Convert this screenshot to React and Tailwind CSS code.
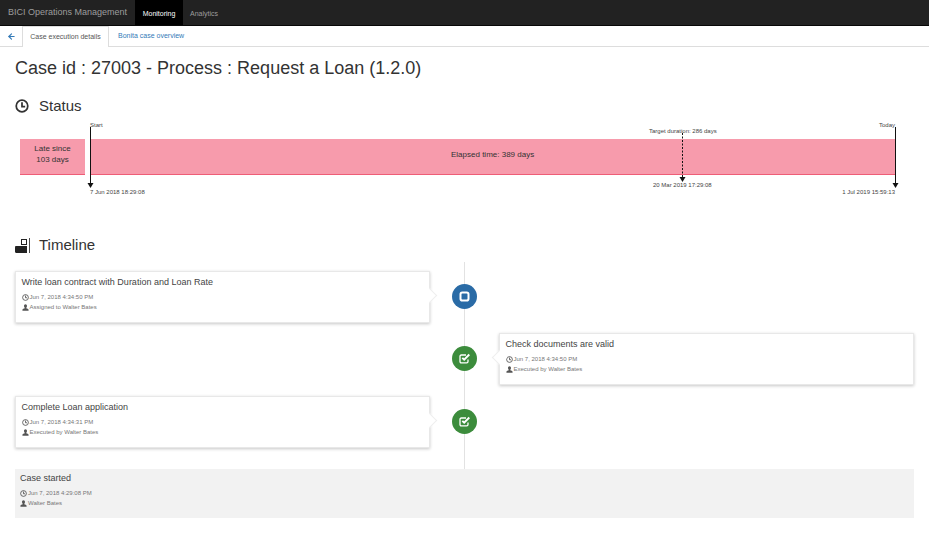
import { ArrowLeft } from "lucide-react";

const font = "font-['Liberation_Sans',Arial,sans-serif]";

function ClockIcon({ size = 7 }) {
  return (
    <svg width={size} height={size} viewBox="0 0 16 16" fill="none" stroke="currentColor" strokeWidth="2" className="shrink-0">
      <circle cx="8" cy="8" r="6.6" />
      <path d="M8 3.600V8.600H11.600" />
    </svg>
  );
}

function UserIcon() {
  return (
    <svg width="7" height="7" viewBox="0 0 16 16" fill="currentColor" className="shrink-0">
      <path d="M8 0.5c2.2 0 3.4 1.7 3.4 3.8 0 1.7-.7 3.2-1.6 4v1.5c1.8.8 5.2 1.3 5.2 3.4v2.3H1v-2.3c0-2.1 3.4-2.6 5.2-3.4V8.3c-.9-.8-1.6-2.3-1.6-4C4.600 2.200 5.800.5 8 .5z" />
    </svg>
  );
}

function Meta({ date, who }) {
  return (
    <div className="text-[6px] leading-[10px] text-[#777]">
      <div className="flex items-center gap-[1px] h-[10px]">
        <span className="text-[#555]"><ClockIcon /></span>
        <span>{date}</span>
      </div>
      <div className="flex items-center gap-[1px] h-[10px]">
        <span className="text-[#555]"><UserIcon /></span>
        <span>{who}</span>
      </div>
    </div>
  );
}

function Card({ title, date, who, side }) {
  return (
    <div className="relative h-[52px] w-[415px] bg-white border border-[#e8e8e8] shadow-[0_1px_3px_rgba(0,0,0,0.22)] pl-[5.500px] pt-[3px]">
      <div className="text-[9px] leading-[14px] text-[#444] mb-[3px]">{title}</div>
      <Meta date={date} who={who} />
      {side === "left" ? (
        <span className="absolute right-[-6px] top-[18px] h-[11px] w-[11px] rotate-45 bg-white border-t border-r border-[#eeeeee]" />
      ) : (
        <span className="absolute left-[-6px] top-[18px] h-[11px] w-[11px] rotate-45 bg-white border-b border-l border-[#eeeeee]" />
      )}
    </div>
  );
}

function Badge({ color, children }) {
  return (
    <div className={`relative z-10 flex h-[25px] w-[25px] items-center justify-center rounded-full text-white ${color}`}>
      {children}
    </div>
  );
}

const stopIcon = (
  <svg width="11" height="11" viewBox="0 0 11 11" fill="none" stroke="white" strokeWidth="2">
    <rect x="1.500" y="1.500" width="8" height="8" rx="1.800" />
  </svg>
);

const checkIcon = (
  <svg width="12" height="11" viewBox="0 0 12 11" fill="none" stroke="white">
    <path d="M9 6.500V8.500C9 9.300 8.500 9.800 7.700 9.800H2.300C1.500 9.800 1 9.300 1 8.500V3.300C1 2.500 1.500 2 2.300 2H7" strokeWidth="1.300" />
    <path d="M3.300 4.800L5.200 6.700L10.300 1.500" strokeWidth="1.900" />
  </svg>
);

function Arrow({ height, dashed }) {
  return (
    <svg width="7" height={height} viewBox={`0 0 7 ${height}`} className="block">
      <line x1="3.500" y1="0" x2="3.500" y2={height - 5} stroke="#111" strokeWidth="1" strokeDasharray={dashed ? "2 1.500" : undefined} />
      <path d={`M0.500 ${height - 5}H6.500L3.500 ${height}Z`} fill="#111" />
    </svg>
  );
}

function StatusChart() {
  return (
    <div className="relative h-[76px] mx-[5px] text-[#444]">
      <div className="absolute inset-x-0 top-[17px] flex gap-[5px]">
        <div className="h-[36px] w-[65px] bg-[#f79bac] border-b border-[#ee5d77] flex items-center justify-center pb-[5px] text-center text-[8px] leading-[11px] text-[#333]">
          Late since<br />103 days
        </div>
        <div className="h-[36px] w-[805px] bg-[#f79bac] border-b border-[#ee5d77] pt-[10px] pl-[361px] text-[8px] leading-[12px] text-[#333]">
          Elapsed time: 389 days
        </div>
      </div>
      {/* start marker */}
      <div className="absolute left-[66.500px] top-[5px]"><Arrow height={61} /></div>
      <div className="absolute left-[70px] top-0 text-[6px] leading-[7px]">Start</div>
      <div className="absolute left-[70px] top-[66px] text-[6px] leading-[9px]">7 Jun 2018 18:29:08</div>
      {/* target marker */}
      <div className="absolute left-[659px] top-[11px]"><Arrow height={49} dashed /></div>
      <div className="absolute left-[629px] top-[5px] text-[6px] leading-[8px] whitespace-nowrap">Target duration: 286 days</div>
      <div className="absolute left-[633px] top-[59px] text-[6px] leading-[9px] whitespace-nowrap">20 Mar 2019 17:29:08</div>
      {/* today marker */}
      <div className="absolute left-[872px] top-[5px]"><Arrow height={61} /></div>
      <div className="absolute right-[14px] top-0 text-[6px] leading-[7px]">Today</div>
      <div className="absolute right-[14px] top-[66px] text-[6px] leading-[9px] whitespace-nowrap">1 Jul 2019 15:59:13</div>
    </div>
  );
}

function Row({ badge, left, right, className }) {
  return (
    <div className={`grid grid-cols-[415px_69px_415px] items-center ${className}`}>
      <div>{left}</div>
      <div className="flex justify-center pb-[2px]">{badge}</div>
      <div>{right}</div>
    </div>
  );
}

export default function App() {
  return (
    <div className={`${font} min-h-[545px] bg-white text-[#333]`}>
      <header className="flex h-[26px] items-stretch bg-[#222] border-b border-[#080808]">
        <div className="flex items-center pl-[8px] pr-[8px] pt-[1px] w-[135px] text-[9px] whitespace-nowrap text-[#9d9d9d]">BICI Operations Management</div>
        <div className="flex items-center justify-center pt-[3px] w-[48px] bg-black text-[7px] text-white">Monitoring</div>
        <div className="flex items-center pl-[7px] pt-[3px] text-[7px] text-[#9d9d9d]">Analytics</div>
      </header>

      <nav className="flex h-[21px] items-end border-b border-[#ddd] text-[7px]">
        <div className="flex h-full w-[22px] items-center justify-center text-[#337ab7]">
          <ArrowLeft size={9} strokeWidth={3} />
        </div>
        <div className="flex h-[21px] -mb-px w-[87px] items-center justify-center bg-white border border-b-0 border-[#ddd] text-[#555]">Case execution details</div>
        <div className="flex h-full items-center pl-[9px] pt-px text-[#337ab7]">Bonita case overview</div>
      </nav>

      <main className="px-[15px]">
        <h1 className="mt-[11px] text-[18px] leading-[21px] font-normal text-[#333] whitespace-nowrap">Case id : 27003 - Process : Request a Loan (1.2.0)</h1>

        <h2 className="mt-[18px] flex h-[18px] items-center gap-[10px] text-[15px] text-[#333]">
          <ClockIcon size={14} />
          Status
        </h2>

        <div className="mt-[7px]">
          <StatusChart />
        </div>

        <h2 className="mt-[38px] flex h-[18px] items-center gap-[9px] text-[15px] text-[#333]">
          <svg width="15" height="15" viewBox="0 0 15 15" fill="#222" className="shrink-0">
            <path d="M0 9.200C0 8.500.5 8 1.200 8H12V15H1.200C.5 15 0 14.500 0 13.800Z" />
            <path d="M6 1H12V7H6ZM7 2V6H11V2Z" fillRule="evenodd" />
            <rect x="14" y="0" width="0.800" height="15" />
          </svg>
          Timeline
        </h2>

        <div className="relative mt-[8px] pt-[9px]">
          <span className="absolute left-[449px] top-0 bottom-0 w-px bg-[#e2e2e2]" />
          <Row
            className="h-[52px]"
            badge={<Badge color="bg-[#2a6ba6]">{stopIcon}</Badge>}
            left={<Card side="left" title="Write loan contract with Duration and Loan Rate" date="Jun 7, 2018 4:34:50 PM" who="Assigned to Walter Bates" />}
          />
          <Row
            className="h-[52px] mt-[10px]"
            badge={<Badge color="bg-[#3c8c3c]">{checkIcon}</Badge>}
            right={<Card side="right" title="Check documents are valid" date="Jun 7, 2018 4:34:50 PM" who="Executed by Walter Bates" />}
          />
          <Row
            className="h-[52px] mt-[11px]"
            badge={<Badge color="bg-[#3c8c3c]">{checkIcon}</Badge>}
            left={<Card side="left" title="Complete Loan application" date="Jun 7, 2018 4:34:31 PM" who="Executed by Walter Bates" />}
          />
          <div className="h-[21px]" />
        </div>

        <section className="h-[49px] w-[899px] bg-[#f2f2f2] pl-[5px] pt-[2px]">
          <div className="text-[9px] leading-[14px] text-[#444] mb-[3px]">Case started</div>
          <Meta date="Jun 7, 2018 4:29:08 PM" who="Walter Bates" />
        </section>
      </main>
    </div>
  );
}
